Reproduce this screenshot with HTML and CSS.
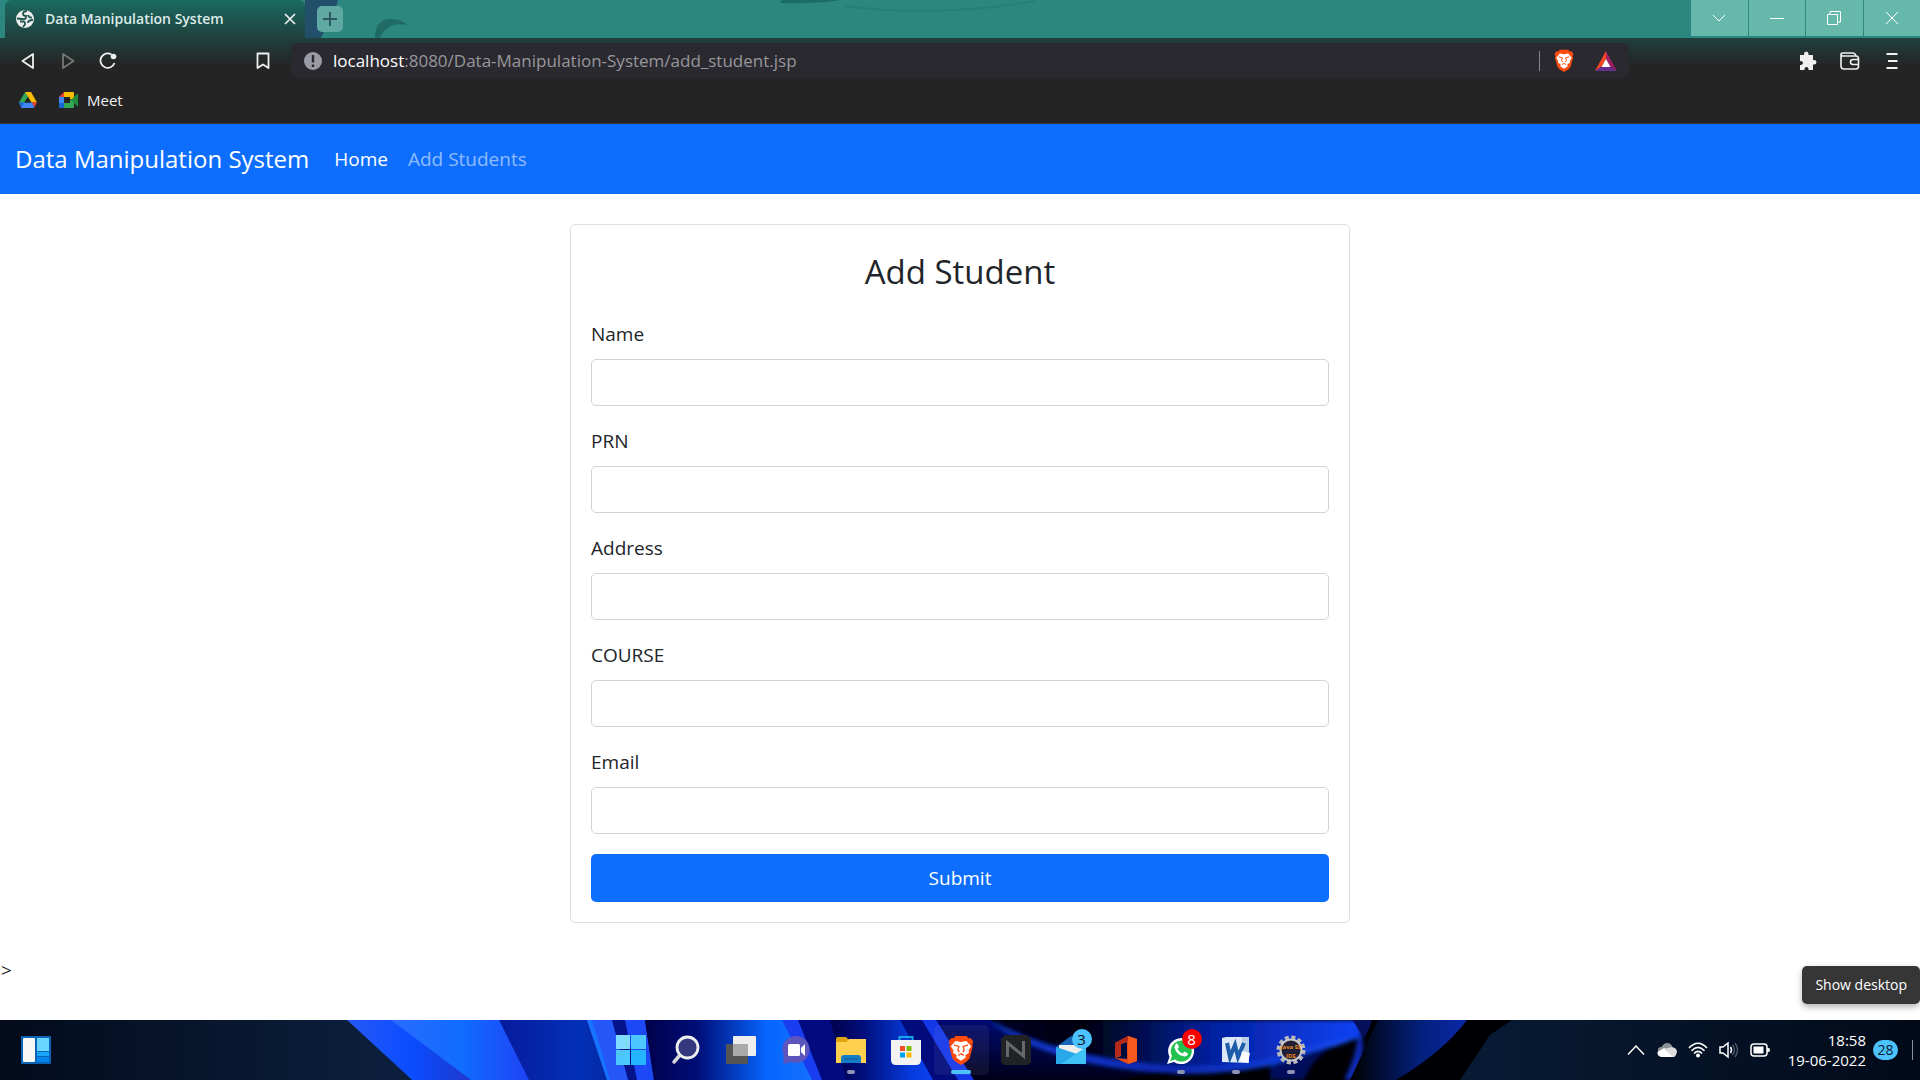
FILE: index.html
```html
<!DOCTYPE html>
<html lang="en">
<head>
<meta charset="utf-8">
<title>Data Manipulation System</title>
<link rel="stylesheet" href="styles.css">
</head>
<body>
<svg class="defs" aria-hidden="true">
  <symbol id="brave" viewBox="0 0 24 28">
    <path d="M7 1h10l2 2 2-.3L23.500 6l-1 3 .5 1.500-3 11.500-3 3L12 28l-5-3-3-3L1 10.500 1.500 9 .5 6 3 2.700 5 3z" fill="#fb4a0d"/>
    <path d="M7 5.500l5 1 5-1 4.500 5-2.500 4 .5 2-3.500 2.500.5 2-4.500 3-4.500-3 .5-2-3.500-2.500.5-2-2.500-4z" fill="#fff"/>
    <path d="M5.500 9.500l4.500 1.200-1 3.300 1.500 2M18.500 9.500L14 10.700l1 3.300-1.500 2M9.500 19l2.500-1.500 2.500 1.500" fill="none" stroke="#fb4a0d" stroke-width="1.200"/>
  </symbol>
</svg>

<header class="browser">
  <div class="tab-strip">
    <svg class="theme-art" viewBox="0 0 1615 38" preserveAspectRatio="xMinYMin slice" aria-hidden="true">
      <path d="M0 0h33q-3 14-12 27l-5 11H0z" fill="#22506b"/>
      <path d="M70 38q0-19 16-19 10 0 17 6-12-2-17 1-7 3-11 12z" fill="#206b65"/>
      <path d="M477 0h58q-25 4-60 3z" fill="#1c6b66"/>
      <path d="M540 6q90 12 190-5" fill="none" stroke="#297e78" stroke-width="2"/>
    </svg>
    <div class="tab">
      <svg width="20" height="20" viewBox="0 0 20 20"><circle cx="10" cy="10" r="9" fill="#eee"/><path d="M12 2q-4 0-4 3 0 2 3 2v2q-1 1.500-4 1L2 9.500M5 12.500h4q1.500 1 1 3l-2 2.500M13 6q1 3 4 2.500M18 11q-5 0-5 3" fill="none" stroke="#1f544e" stroke-width="1.800"/></svg>
      <span class="tab-title">Data Manipulation System</span>
      <button class="icon-btn" aria-label="Close tab"><svg width="12" height="12" viewBox="0 0 12 12"><path d="M1 1l10 10M11 1L1 11" stroke="#eee" stroke-width="1.700"/></svg></button>
    </div>
    <button class="new-tab" aria-label="New tab"><svg width="16" height="16" viewBox="0 0 16 16"><path d="M8 1v14M1 8h14" stroke="#2b5960" stroke-width="2"/></svg></button>
    <div class="window-controls">
      <button aria-label="Search tabs"><svg width="14" height="14" viewBox="0 0 14 14"><path d="M1 4l6 6 6-6"/></svg></button>
      <button aria-label="Minimize"><svg width="14" height="14" viewBox="0 0 14 14"><path d="M0 7.500h14"/></svg></button>
      <button aria-label="Restore"><svg width="14" height="14" viewBox="0 0 14 14"><path d="M.5 3.500h10v10H.5zM3 3V.5h10.500V11H11"/></svg></button>
      <button aria-label="Close"><svg width="14" height="14" viewBox="0 0 14 14"><path d="M1 1l12 12M13 1L1 13"/></svg></button>
    </div>
  </div>
  <div class="toolbar">
    <div class="nav-buttons">
      <button class="icon-btn" aria-label="Back"><svg width="16" height="18" viewBox="0 0 16 18"><path d="M13 2v14L2.500 9z" fill="none" stroke="#f0f0f0" stroke-width="1.800" stroke-linejoin="round"/></svg></button>
      <button class="icon-btn" aria-label="Forward"><svg width="16" height="18" viewBox="0 0 16 18"><path d="M3 2v14l10.500-7z" fill="none" stroke="#777" stroke-width="1.800" stroke-linejoin="round"/></svg></button>
      <button class="icon-btn" aria-label="Reload"><svg width="18" height="18" viewBox="0 0 18 18"><path d="M12.500 2.500A7.200 7.200 0 1 0 15.500 11" fill="none" stroke="#f0f0f0" stroke-width="1.800"/><circle cx="14.500" cy="4.500" r="2.800" fill="#f0f0f0"/></svg></button>
      <button class="icon-btn bookmark" aria-label="Bookmark"><svg width="14" height="18" viewBox="0 0 14 18"><path d="M1.500 1.500h11v14.500L7 12.500 1.500 16z" fill="none" stroke="#f0f0f0" stroke-width="1.800" stroke-linejoin="round"/></svg></button>
    </div>
    <div class="address">
      <svg width="20" height="20" viewBox="0 0 20 20"><circle cx="10" cy="10" r="9" fill="#9a9ba5"/><path d="M10 4v7.500M10 13.500v2.500" stroke="#2b2930" stroke-width="2.400"/></svg>
      <div class="url" role="textbox" aria-label="Address"><span class="host">localhost</span>:8080/Data-Manipulation-System/add_student.jsp</div>
      <span class="divider"></span>
      <button class="icon-btn" aria-label="Brave Shields"><svg width="20" height="23"><use href="#brave"/></svg></button>
      <button class="icon-btn" aria-label="Brave Rewards"><svg width="22" height="20" viewBox="0 0 22 20"><path d="M11 0L0 20l7-5 4-7z" fill="#ff4724"/><path d="M11 0l11 20-7-5-4-7z" fill="#9e1f63"/><path d="M0 20h22l-7-4.500H7z" fill="#662d91"/><path d="M11 8l4.500 8h-9z" fill="#fff"/></svg></button>
    </div>
    <div class="extensions">
      <button class="icon-btn" aria-label="Extensions"><svg width="20" height="20" viewBox="0 0 20 20"><path d="M2 4h4V3q0-2.500 2.300-2.500T10.500 3v1H15v5h1q2.500 0 2.500 2.200T16 13.500h-1V19h-4.500v-1q0-2-2-2t-2 2v1H2v-5h1q2-.3 2-2t-2-2H2z" fill="#f0f0f0"/></svg></button>
      <button class="icon-btn" aria-label="Wallet"><svg width="20" height="18" viewBox="0 0 20 18"><path d="M1 3v11q0 3 3 3h12q2.500 0 2.500-3V7Q18.500 4 16 4H3Q1 4 1 2.500T3 1h10q2 0 3 2.500M19 7.500h-6q-2.500 0-2.500 2.500t2.500 2.500h6" fill="none" stroke="#f0f0f0" stroke-width="1.600"/></svg></button>
      <button class="icon-btn" aria-label="Menu"><svg width="12" height="18" viewBox="0 0 12 18"><path d="M.5 2h11M2 9h9.500M.5 16h11" stroke="#f0f0f0" stroke-width="2"/></svg></button>
    </div>
  </div>
  <nav class="bookmarks" aria-label="Bookmarks">
    <a href="#drive" aria-label="Drive"><svg width="18" height="16" viewBox="0 0 18 16"><path d="M6 0L0 10.500l2.500 4.300L9 4.500z" fill="#34a853"/><path d="M6 0h6l6 10.500h-5.500z" fill="#fbbc04"/><path d="M12 10.500h6l-2.500 4.500z" fill="#ea4335"/><path d="M0 10.500h13L15.500 16h-13z" fill="#4285f4"/><path d="M0 10.500h5L2.500 15z" fill="#1967d2"/><path d="M9 5.500l3 5H6z" fill="#242424"/></svg></a>
    <a href="#meet"><svg width="20" height="16" viewBox="0 0 20 16"><path d="M5 0v5H0z" fill="#ea4335"/><path d="M0 5h5v6H0z" fill="#4285f4"/><path d="M0 11h5v5H1q-1 0-1-1z" fill="#1967d2"/><path d="M5 0h9q1 0 1 1v6h-4V5H5z" fill="#fbbc04"/><path d="M5 11h6V8l4-2v9q0 1-1 1H5z" fill="#34a853"/><path d="M12 8l6-6q1-.5 1 .5v11q0 1-1 .5z" fill="#1e8e3e"/></svg><span>Meet</span></a>
  </nav>
</header>

<main class="page">
  <nav class="navbar">
    <a class="brand" href="#top">Data Manipulation System</a>
    <a class="nav-link active" href="#home">Home</a>
    <a class="nav-link" href="#add">Add Students</a>
  </nav>
  <form class="card">
    <h1 class="card-title">Add Student</h1>
    <div class="field"><label for="name">Name</label><input type="text" id="name"></div>
    <div class="field"><label for="prn">PRN</label><input type="text" id="prn"></div>
    <div class="field"><label for="address">Address</label><input type="text" id="address"></div>
    <div class="field"><label for="course">COURSE</label><input type="text" id="course"></div>
    <div class="field"><label for="email">Email</label><input type="email" id="email"></div>
    <button class="submit" type="submit">Submit</button>
  </form>
  <p class="stray">&gt;</p>
</main>

<footer class="taskbar">
  <svg class="wallpaper" viewBox="0 0 1920 60" preserveAspectRatio="none" aria-hidden="true">
    <defs>
      <linearGradient id="night"><stop offset="0" stop-color="#030b1c"/><stop offset=".2" stop-color="#0b1f3c"/><stop offset=".78" stop-color="#071a33"/><stop offset="1" stop-color="#020a19"/></linearGradient>
      <linearGradient id="petalA"><stop offset="0" stop-color="#2558f5"/><stop offset=".5" stop-color="#0a4cff"/><stop offset="1" stop-color="#2434c0"/></linearGradient>
      <linearGradient id="petalB"><stop offset="0" stop-color="#2a6bff"/><stop offset=".5" stop-color="#106cff"/><stop offset="1" stop-color="#2040f5"/></linearGradient>
      <linearGradient id="petalC"><stop offset="0" stop-color="#061a9c"/><stop offset=".7" stop-color="#0330b8"/><stop offset="1" stop-color="#0428a0"/></linearGradient>
      <linearGradient id="petalD"><stop offset="0" stop-color="#00004a"/><stop offset=".3" stop-color="#000e78"/><stop offset=".7" stop-color="#0666ff"/><stop offset="1" stop-color="#1673ff"/></linearGradient>
      <linearGradient id="petalE"><stop offset="0" stop-color="#00014c"/><stop offset=".3" stop-color="#010c78"/><stop offset=".8" stop-color="#063de0"/><stop offset="1" stop-color="#0c3ff0"/></linearGradient>
      <linearGradient id="petalF"><stop offset="0" stop-color="#000328"/><stop offset=".25" stop-color="#00020f"/><stop offset=".6" stop-color="#0420a0"/><stop offset="1" stop-color="#0d42f5"/></linearGradient>
      <linearGradient id="petalG"><stop offset="0" stop-color="#000"/><stop offset=".6" stop-color="#03207c"/><stop offset="1" stop-color="#0a28a8"/></linearGradient>
      <linearGradient id="petalH" x1="0" y1="0" x2="0" y2="1"><stop offset="0" stop-color="#000a70"/><stop offset="1" stop-color="#000018"/></linearGradient>
      <linearGradient id="sweep" gradientUnits="userSpaceOnUse" x1="980" y1="0" x2="1362" y2="0"><stop offset="0" stop-color="#1a48f0"/><stop offset=".5" stop-color="#0a28b0"/><stop offset="1" stop-color="#1650f8"/></linearGradient>
      <filter id="soft" x="-5%" y="-20%" width="110%" height="140%"><feGaussianBlur stdDeviation="2"/></filter>
    </defs>
    <path d="M0 0h1920v60H0z" fill="url(#night)"/>
    <path d="M347 0h1165l-22 15-30 45H412z" fill="#000004"/>
    <path d="M347 0h60l75 60h-70z" fill="url(#petalA)"/>
    <path d="M391 0h112l30 60h-62z" fill="url(#petalB)"/>
    <path d="M499 0h96l18 60h-84z" fill="url(#petalC)"/>
    <path d="M587 0h28l20 60h-27z" fill="#2456f8"/>
    <path d="M587 0h5l18 60h-3z" fill="#1673ff"/>
    <path d="M612 0h16l12 60h-12z" fill="#04138a"/>
    <path d="M625 0h20l9 60h-17z" fill="#1c49f5"/>
    <path d="M645 0h142l33 60H654z" fill="url(#petalD)"/>
    <path d="M782 0h20l25 60h-15z" fill="#1a3df0"/>
    <path d="M798 0h34l18 60h-28z" fill="#020a80"/>
    <path d="M830 0h80l24 60h-88z" fill="url(#petalE)"/>
    <path d="M900 0h26l35 60h-28z" fill="#020b7c"/>
    <path d="M922 0h18l36 60h-18z" fill="#1437e8"/>
    <path d="M936 0h54q60 42 190 48l-60 12H974z" fill="url(#petalH)"/>
    <g filter="url(#soft)">
      <path d="M990 0h368l4 18q-25-1-72 20-60 14-110 13Q1060 46 990 0z" fill="url(#petalF)"/>
      <path d="M988 0q68 40 192 46 60 1 110-12 50-18 70-17-24 10-70 24-50 14-110 13Q1050 48 988 0z" fill="url(#sweep)"/>
      <path d="M1358 18q-4 24-14 42h10q12-24 8-42z" fill="#0a2bb8"/>
      <path d="M1304 60q10-24 30-34-20 4-64 20v14z" fill="#020a5c"/>
    </g>
    <path d="M1352 0h20q-4 14-9 18-4-10-11-18z" fill="#04105a"/>
    <path d="M1378 0h89q-24 32-71 60h-46z" fill="url(#petalG)"/>
  </svg>
  <div class="widgets">
    <button class="icon-btn" aria-label="Widgets"><svg width="30" height="28" viewBox="0 0 30 28"><rect width="30" height="28" rx="1" fill="#0b63b5"/><rect x="2" y="2" width="12" height="24" rx="1" fill="#f7f7f7"/><path d="M16 2h12v13H16z" fill="#68d6ff"/><path d="M16 16h12v4H16z" fill="#19a5fb"/><path d="M16 21h12v5H16z" fill="#0485ee"/></svg></button>
  </div>
  <div class="apps">
    <button class="app" aria-label="Start"><svg width="30" height="30" viewBox="0 0 30 30"><path d="M0 0h14v14H0z" fill="#7fdcff"/><path d="M15 0h15v14H15zM0 15h14v15H0z" fill="#4dc8ff"/><path d="M15 15h15v15H15z" fill="#25b4ff"/></svg></button>
    <button class="app" aria-label="Search"><svg width="30" height="30" viewBox="0 0 30 30"><path d="M9 20l-6 7" stroke="#d5d5d5" stroke-width="3.500" stroke-linecap="round"/><circle cx="16.500" cy="12.500" r="10.500" fill="#33387f" stroke="#eee" stroke-width="2.800"/></svg></button>
    <button class="app" aria-label="Task view"><svg width="30" height="28" viewBox="0 0 30 28"><rect y="8" width="22" height="20" rx="1" fill="#555"/><rect x="7" width="23" height="20" rx="1" fill="#eee"/><path d="M7 8h15v12H7z" fill="#aaa"/></svg></button>
    <button class="app" aria-label="Chat"><svg width="30" height="30" viewBox="0 0 30 30"><path d="M15 1a13.500 13.500 0 1 1-5 26q-4 2-8 1.500Q3 26 2.500 20A13.500 13.500 0 0 1 15 1z" fill="#5c55bd"/><rect x="7" y="9" width="12" height="12" rx="1.500" fill="#fff"/><path d="M20 13l4-4v12l-4-4z" fill="#fff"/></svg></button>
    <button class="app running" aria-label="File Explorer"><svg width="30" height="28" viewBox="0 0 30 28"><path d="M0 3q0-2 2-2h8l3 3v8H0z" fill="#e2a310"/><path d="M0 6h10l3-3h17v24H0z" fill="#ffd04e"/><path d="M5 27v-5q0-3 3-3h14q3 0 3 3v5z" fill="#157cc6"/><path d="M8 23h14" stroke="#0c5a96"/></svg></button>
    <button class="app" aria-label="Microsoft Store"><svg width="30" height="30" viewBox="0 0 30 30"><path d="M8.500 6V2h13v4" fill="none" stroke="#18a6e8" stroke-width="2"/><path d="M0 5h30v20q0 5-5 5H5q-5 0-5-5z" fill="#f2f2f2"/><path d="M9 11h5v5H9z" fill="#f25022"/><path d="M15.500 11h5v5h-5z" fill="#7fba00"/><path d="M9 17.500h5v5H9z" fill="#00a4ef"/><path d="M15.500 17.500h5v5h-5z" fill="#ffb900"/></svg></button>
    <button class="app running focused" aria-label="Brave"><svg width="26" height="30"><use href="#brave"/></svg></button>
    <button class="app" aria-label="Notes"><svg width="30" height="30" viewBox="0 0 30 30"><path d="M4 0h22l4 4v23l-3 3H3l-3-3V4z" fill="#202224"/><path d="M6.500 22V8l16 13V6" fill="none" stroke="#66696c" stroke-width="3"/></svg></button>
    <button class="app" aria-label="Mail"><svg width="30" height="28" viewBox="0 0 30 28"><path d="M0 11L15 0l15 11v8H0z" fill="#1565b8"/><path d="M3 9h24v5l-12 7L3 14z" fill="#eee"/><path d="M0 11l30 10v7H0z" fill="#28a8ea"/><path d="M30 11L5 28h25z" fill="#3fc2f5"/></svg><span class="badge mail-badge">3</span></button>
    <button class="app" aria-label="Office"><svg width="24" height="30" viewBox="0 0 24 30"><path d="M1 8L14 1l9 3v22l-9 3-13-6 12 1V7L7 9v12l-6 2z" fill="#e64a19"/><path d="M14 1l9 3v22l-9 3z" fill="#f35a1c"/><path d="M1 8L14 1v5L7 9v11l-6 3z" fill="#b5281c"/></svg></button>
    <button class="app running" aria-label="WhatsApp"><svg width="30" height="30" viewBox="0 0 30 30"><path d="M1 29l2.500-7A13 13 0 1 1 8 27z" fill="#fff"/><path d="M4 26l2-5A10.500 10.500 0 1 1 9 24.500z" fill="#22c04f"/><path d="M11 8l2 4-1.500 2q2 3.500 5 4.500l2-2 3.500 2q-.5 3-3.500 3-8-1-10-9 0-3 2.500-4.500z" fill="#fff"/></svg><span class="badge chat-badge">8</span></button>
    <button class="app running" aria-label="Word"><svg width="28" height="28" viewBox="0 0 28 28"><path d="M0 2l4-1h23v26l-27-1z" fill="#dce8f6"/><path d="M20 1h7v26h-7z" fill="#b8d0ea"/><path d="M5 7l3 14 5-12 3 12 6-14" fill="none" stroke="#1c5ca8" stroke-width="4"/><path d="M20 15l8 2-2 10-8-2z" fill="#fff"/></svg></button>
    <button class="app running" aria-label="Java EE IDE"><svg width="30" height="30" viewBox="0 0 30 30"><circle cx="15" cy="15" r="12.500" fill="none" stroke="#b8b8b8" stroke-width="4" stroke-dasharray="4 2.540"/><circle cx="15" cy="15" r="10.500" fill="#211f35" stroke="#c8c8c8" stroke-width="2"/><text class="ide" x="15" y="14" text-anchor="middle">Java EE</text><text class="ide" x="15" y="23" text-anchor="middle">IDE</text></svg></button>
  </div>
  <div class="tray">
    <button class="icon-btn" aria-label="Show hidden icons"><svg width="18" height="12" viewBox="0 0 18 12"><path d="M1 10.500L9 2l8 8.500" fill="none" stroke="#fff" stroke-width="1.500"/></svg></button>
    <button class="icon-btn" aria-label="OneDrive"><svg width="20" height="14" viewBox="0 0 20 14"><path d="M1 9Q0 4 4.500 4 7 0 10 0q4 0 5.500 4l-8 5z" fill="#8d9299"/><path d="M4 14q-4-1-3.500-5L7 5l12 6q-.5 3-3 3z" fill="#fff"/><path d="M7 6l8-2q5 1 5 5-1 4-4 5z" fill="#ddd"/></svg></button>
    <button class="icon-btn" aria-label="Wi-Fi"><svg width="20" height="16" viewBox="0 0 20 16"><g fill="none" stroke="#fff" stroke-width="1.600"><path d="M1 6q9-9.500 18 0M3.500 8.800q6.500-6.800 13 0M6 11.500q4-4.200 8 0"/></g><circle cx="10" cy="13.500" r="2" fill="#fff"/></svg></button>
    <button class="icon-btn" aria-label="Volume"><svg width="20" height="18" viewBox="0 0 20 18"><path d="M1 6h3l5-4v14l-5-4H1z" fill="none" stroke="#fff" stroke-width="1.500"/><path d="M11.500 6q2 3 0 6" fill="none" stroke="#fff" stroke-width="1.500"/><path d="M13.500 4q4 5 0 10M16 2q5 7 0 14" fill="none" stroke="#4c5563" stroke-width="1.500"/></svg></button>
    <button class="icon-btn" aria-label="Battery"><svg width="20" height="14" viewBox="0 0 20 14"><rect x="1" y="1" width="16" height="12" rx="3" fill="none" stroke="#fff" stroke-width="1.500"/><rect x="3.500" y="3.500" width="10" height="7" fill="#fff"/><path d="M17 5h1.500q1.500 0 1.500 2t-1.500 2H17z" fill="#fff"/></svg></button>
    <div class="clock"><time>18:58</time><time>19-06-2022</time></div>
    <span class="count">28</span>
    <span class="desktop-edge"></span>
  </div>
  <div class="tooltip" role="tooltip">Show desktop</div>
</footer>
</body>
</html>
```
FILE: styles.css
```css
* { box-sizing: border-box; }

body {
  margin: 0;
  min-height: 100vh;
  display: flex;
  flex-direction: column;
  font-family: "Open Sans", "Noto Sans", sans-serif;
  font-size: 19px;
  line-height: 30px;
  color: #212529;
  background: #fff;
}

button { font: inherit; border: 0; padding: 0; background: none; color: inherit; }
a { color: inherit; text-decoration: none; }
svg { display: block; flex: none; }
.defs { position: absolute; width: 0; height: 0; }
.icon-btn { display: flex; align-items: center; justify-content: center; min-width: 20px; }

/* Browser window */
.browser {
  color: #f0f0f0;
  background: linear-gradient(#1a6a60, #20403e 38px, #242424 66px);
  border-bottom: 1px solid #3a3a3e;
}
.tab-strip {
  display: flex;
  height: 38px;
  padding-left: 5px;
  position: relative;
  background: #2b8780;
}
.theme-art { position: absolute; left: 305px; top: 0; width: calc(100% - 305px); height: 38px; }
.tab {
  position: relative;
  display: flex;
  align-items: center;
  gap: 10px;
  width: 300px;
  padding: 0 5px 0 10px;
  border-radius: 6px 6px 0 0;
  background: linear-gradient(#1a6a60, #20403e);
}
.tab-title { flex: 1; font-size: 14px; font-weight: 600; color: #dcebe8; }
.new-tab {
  position: relative;
  display: grid;
  place-items: center;
  width: 26px;
  height: 26px;
  margin: 6px 0 0 12px;
  border-radius: 5px;
  background: #5fa8a3;
}
.window-controls { position: relative; display: flex; gap: 1px; margin-left: auto; width: 229px; height: 36px; }
.window-controls button { display: grid; place-items: center; flex: 1; background: #66b8aa; }
.window-controls path { fill: none; stroke: #fff; }

.toolbar { display: grid; grid-template-columns: 291px 1fr 291px; align-items: center; padding-top: 5px; }
.nav-buttons { display: flex; align-items: center; gap: 20px; padding: 0 18px; }
.bookmark { margin-left: auto; }
.address {
  display: flex;
  align-items: center;
  height: 35px;
  padding: 0 12px;
  border-radius: 6px;
  background: #2b2930;
}
.url { flex: 1; margin-left: 10px; font-size: 17px; color: #97979c; }
.host { color: #fff; }
.divider { width: 1px; height: 20px; margin-right: 14px; background: #85858a; }
.address .icon-btn + .icon-btn { margin-left: 21px; }
.extensions { display: flex; align-items: center; justify-content: flex-end; gap: 22px; padding-right: 18px; }
.bookmarks { display: flex; align-items: center; gap: 22px; height: 45px; padding: 0 0 2px 19px; font-size: 15px; }
.bookmarks a { display: flex; align-items: center; gap: 8px; }

/* Page */
.page { flex: 1; }
.navbar { display: flex; align-items: center; height: 70px; padding: 0 15px; background: #0d6efd; color: #fff; }
.brand { margin-right: 25px; font-size: 24px; }
.nav-link { margin-right: 20px; color: rgba(255, 255, 255, .55); }
.nav-link.active { color: #fff; }

.card {
  width: 780px;
  max-width: 100%;
  margin: 30px auto 0;
  padding: 20px;
  border: 1px solid #dfdfdf;
  border-radius: 5px;
}
.card-title { margin: 0 0 20px; font-size: 33px; font-weight: 400; line-height: 54px; text-align: center; }
.field { margin-bottom: 20px; }
.field label { display: block; margin-bottom: 10px; }
.field input {
  display: block;
  width: 100%;
  height: 47px;
  padding: 7px 15px;
  border: 1px solid #ced4da;
  border-radius: 5px;
  font: inherit;
}
.submit { display: block; width: 100%; height: 48px; border-radius: 5px; background: #0d6efd; color: #fff; }
.stray { margin: 32px 0 0; padding-left: 1px; font-size: 19px; }

/* Taskbar */
.taskbar {
  position: relative;
  display: grid;
  grid-template-columns: 1fr auto 1fr;
  align-items: center;
  height: 60px;
  color: #fff;
}
.wallpaper { position: absolute; inset: 0; width: 100%; height: 100%; }
.widgets, .apps, .tray { position: relative; display: flex; align-items: center; }
.apps { padding-left: 2px; }
.widgets { padding-left: 21px; }
.app { position: relative; display: grid; place-items: center; width: 55px; height: 50px; }
.running::after {
  content: "";
  position: absolute;
  bottom: 1px;
  width: 8px;
  height: 4px;
  border-radius: 2px;
  background: #8e93b5;
}
.focused { border-radius: 5px; background: rgba(255, 255, 255, .06); }
.focused::after { width: 20px; background: #4cc2ff; }
.badge {
  position: absolute;
  top: 4px;
  right: 7px;
  width: 20px;
  height: 20px;
  border-radius: 10px;
  font-size: 15px;
  line-height: 20px;
  text-align: center;
}
.mail-badge { background: #4cc2ff; color: #111; }
.chat-badge { background: #f00; }
.ide { font-size: 6px; font-weight: 700; fill: #f08a24; }
.tray { justify-content: flex-end; gap: 11px; padding-right: 7px; }
.clock { display: flex; flex-direction: column; margin-left: 7px; font-size: 15px; line-height: 20px; text-align: right; }
.count {
  width: 25px;
  border-radius: 10px;
  background: #4cc2ff;
  color: #0b1a2c;
  font-size: 14px;
  line-height: 20px;
  text-align: center;
  margin-left: -4px;
}
.desktop-edge { width: 1px; height: 20px; margin-left: 3px; background: #8a909a; }
.tooltip {
  position: absolute;
  right: 0;
  bottom: 76px;
  padding: 4px 13px;
  border-radius: 5px;
  background: #363636;
  box-shadow: 0 3px 6px rgba(0, 0, 0, .3);
  font-size: 14px;
}
```
